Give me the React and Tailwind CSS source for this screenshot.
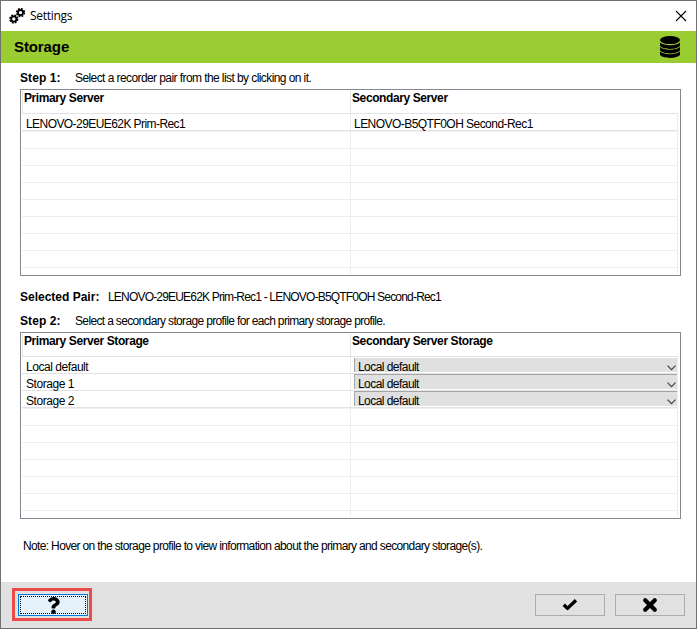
import React from "react";
import clsx from "clsx";
import { FaQuestion } from "react-icons/fa";

const recorders = [
  { primary: "LENOVO-29EUE62K Prim-Rec1", secondary: "LENOVO-B5QTF0OH Second-Rec1" },
];

const storages = ["Local default", "Storage 1", "Storage 2"];

const GearsIcon = () => (
  <svg width="16" height="16" viewBox="0 0 16 16" fill="none" stroke="black">
    <circle cx="4.800" cy="11" r="2.600" strokeWidth="1.8" />
    <circle cx="4.800" cy="11" r="3.900" strokeWidth="1.5" strokeDasharray="1.9 1.163" />
    <circle cx="11.500" cy="4.600" r="2.600" strokeWidth="1.8" />
    <circle cx="11.500" cy="4.600" r="3.900" strokeWidth="1.5" strokeDasharray="1.9 1.163" />
  </svg>
);

const DatabaseIcon = () => (
  <svg width="20" height="22" viewBox="0 0 20 22" fill="black">
    <ellipse cx="10" cy="4.100" rx="10" ry="4" />
    <path d="M0 6.500C2 8.500 5.800 9.200 10 9.200s8-.7 10-2.700v2.700c0 2-4.400 3.700-10 3.700S0 11.200 0 9.200z" />
    <path d="M0 11C2 13 5.800 13.700 10 13.700s8-.7 10-2.700v2.700c0 2-4.400 3.700-10 3.700S0 15.700 0 13.700z" />
    <path d="M0 15.500C2 17.500 5.800 18.200 10 18.200s8-.7 10-2.700v2.700c0 2-4.400 3.700-10 3.700S0 20.200 0 18.200z" />
  </svg>
);

const CheckIcon = () => (
  <svg width="16" height="14" viewBox="0 0 16 14" fill="none" stroke="black" strokeWidth="3.4" strokeLinejoin="round">
    <path d="M1.800 6.800 5.500 10.400 14 2.200" />
  </svg>
);

const CrossIcon = () => (
  <svg width="16" height="16" viewBox="0 0 16 16" fill="none" stroke="black" strokeWidth="4.200" strokeLinecap="round">
    <path d="M3.200 3.200l9.600 9.600M12.800 3.200l-9.600 9.600" />
  </svg>
);

const TableHeader = ({ left, right }) => (
  <div className="flex h-[23px] border-b border-[#e2e2e2] font-bold leading-[14px] tracking-[-0.4px]">
    <div className="w-[329px] border-l border-r border-[#e2e2e2] pl-px">{left}</div>
    <div className="pl-px">{right}</div>
  </div>
);

const EmptyRows = () => (
  <div className="flex flex-1 flex-col overflow-hidden border-t border-[#f1f1f1]">
    {Array.from({ length: 9 }, (_, i) => (
      <div key={i} className="flex h-[17px] shrink-0 border-b border-[#ededed]">
        <div className="w-[329px] border-r border-[#ededed]"></div>
      </div>
    ))}
  </div>
);

const Table = ({ header, children }) => (
  <div className="ml-[19px] flex h-[187px] w-[661px] flex-col border border-[#828790] py-px pl-px pr-[2px]">
    {header}
    <div className="flex flex-1 flex-col overflow-hidden border-r border-[#ededed]">
      {children}
      <EmptyRows />
    </div>
  </div>
);

const ProfileSelect = ({ first }) => (
  <div
    className={clsx(
      "mb-px flex flex-1 items-start justify-between border-l border-[#a5a5a5] bg-[#e0e0e0] pl-[3px] pr-px",
      first ? "mt-px" : "border-t"
    )}
  >
    <span className="mt-[5px] leading-[9px] tracking-[-0.55px]">Local default</span>
    <svg className="mt-[7px]" width="9" height="6" viewBox="0 0 9 6" fill="none" stroke="#444" strokeWidth="1.2">
      <path d="M.5.700 4.500 4.700 8.500.7" />
    </svg>
  </div>
);

const App = () => {
  return (
    <div className="flex h-[629px] w-[697px] flex-col overflow-hidden border border-[#707070] bg-white font-['Liberation_Sans',Arial,sans-serif] text-[12px] text-black">
      <div className="flex h-[30px] shrink-0 items-center pl-[8px] pr-[9px]">
        <GearsIcon />
        <span className="ml-[5px] flex-1 font-['Open_Sans','Noto_Sans',sans-serif] tracking-[-0.3px]">Settings</span>
        <svg width="12" height="12" viewBox="0 0 12 12" fill="none" stroke="black" strokeWidth="1.1">
          <path d="M1 1l10 10M11 1 1 11" />
        </svg>
      </div>

      <div className="flex h-[32px] shrink-0 items-center justify-between bg-[#9acd32] pl-[13px] pr-[16px]">
        <h1 className="text-[15px] font-bold tracking-[-0.1px]">Storage</h1>
        <DatabaseIcon />
      </div>

      <div className="flex h-[26px] shrink-0 items-center pl-[19px] pt-[4px]">
        <span className="w-[55px] font-bold tracking-[0.1px]">Step 1:</span>
        <span className="tracking-[-0.58px]">Select a recorder pair from the list by clicking on it.</span>
      </div>

      <Table header={<TableHeader left="Primary Server" right="Secondary Server" />}>
        {recorders.map((r) => (
          <div key={r.primary} className="flex h-[17px] shrink-0 border-b border-[#e2e2e2] leading-[21px]">
            <div className="w-[329px] border-r border-[#ededed] pl-[4px] tracking-[-0.57px]">{r.primary}</div>
            <div className="pl-[3px] tracking-[-0.54px]">{r.secondary}</div>
          </div>
        ))}
      </Table>

      <div className="flex h-[56px] shrink-0 flex-col pl-[19px]">
        <div className="flex h-[24px] items-center pt-[18px]">
          <span className="w-[88px] font-bold">Selected Pair:</span>
          <span className="tracking-[-0.81px]">LENOVO-29EUE62K Prim-Rec1 - LENOVO-B5QTF0OH Second-Rec1</span>
        </div>
        <div className="flex h-[32px] items-center pt-[10px]">
          <span className="w-[55px] font-bold tracking-[0.1px]">Step 2:</span>
          <span className="tracking-[-0.65px]">Select a secondary storage profile for each primary storage profile.</span>
        </div>
      </div>

      <Table header={<TableHeader left="Primary Server Storage" right="Secondary Server Storage" />}>
        {storages.map((name, i) => (
          <div key={name} className="flex h-[17px] shrink-0 border-b border-[#e2e2e2]">
            <div className="w-[329px] border-r border-[#ededed] pl-[4px] leading-[21px] tracking-[-0.45px]">{name}</div>
            <div className="flex flex-1 pl-[3px]">
              <ProfileSelect first={i === 0} />
            </div>
          </div>
        ))}
      </Table>

      <p className="flex-1 pl-[22px] pt-[18px] tracking-[-0.65px]">
        Note: Hover on the storage profile to view information about the primary and secondary storage(s).
      </p>

      <div className="flex h-[46px] shrink-0 items-start bg-[#e1e1e1] pl-[11px] pr-[11px] pt-[6px]">
        <div className="mr-auto h-[33px] w-[80px] border-3 border-[#eb4b4b] pl-[3px] pt-[3px]">
          <button className="block h-[22px] w-[70px] border border-[#0078d7] bg-[#e5f1fb] p-px">
            <span className="flex h-full items-center justify-center border border-dotted border-black">
              <FaQuestion className="h-[17px] w-[13px] shrink-0" />
            </span>
          </button>
        </div>
        <button className="mt-[6px] flex h-[22px] w-[70px] items-center justify-center border border-[#adadad]">
          <CheckIcon />
        </button>
        <button className="ml-[10px] mt-[6px] flex h-[22px] w-[70px] items-center justify-center border border-[#adadad]">
          <CrossIcon />
        </button>
      </div>
    </div>
  );
};

export default App;
